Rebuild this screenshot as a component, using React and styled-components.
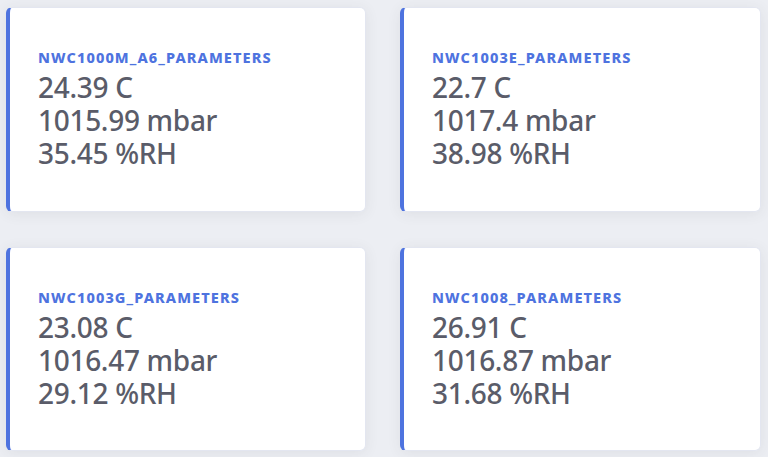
import React from "react";
import styled, { createGlobalStyle } from "styled-components";

const Global = createGlobalStyle`
  html, body { margin: 0; padding: 0; }
  body {
    background: #eceef3;
    font-family: "Noto Sans", sans-serif;
    width: 768px;
    height: 457px;
    overflow: hidden;
  }
`;

const Grid = styled.div`
  display: grid;
  grid-template-columns: 360px 361px;
  grid-template-rows: 205px 204px;
  column-gap: 34px;
  row-gap: 35px;
  padding: 7px 7px 6px 6px;
`;

const Card = styled.div`
  background: #fff;
  border: 1px solid #e3e6f0;
  border-left: 4px solid #4e73df;
  border-radius: 6px;
  box-shadow: 0 2px 14px 0 rgba(58, 59, 69, 0.08);
  padding: 40px 28px 0 28px;
  box-sizing: border-box;
`;

const Title = styled.div`
  color: #4e73df;
  font-size: 14.5px;
  font-weight: 800;
  letter-spacing: 1.1px;
  text-transform: uppercase;
  line-height: 18px;
  margin-bottom: 5px;
`;

const Values = styled.div`
  color: #5a5c69;
  font-size: 28px;
  font-weight: 550;
  letter-spacing: -0.3px;
  line-height: 33px;
`;

const data = [
  { name: "NWC1000M_A6_PARAMETERS", t: "24.39", p: "1015.99", h: "35.45" },
  { name: "NWC1003E_PARAMETERS", t: "22.7", p: "1017.4", h: "38.98" },
  { name: "NWC1003G_PARAMETERS", t: "23.08", p: "1016.47", h: "29.12" },
  { name: "NWC1008_PARAMETERS", t: "26.91", p: "1016.87", h: "31.68" },
];

export default function App() {
  return (
    <>
      <Global />
      <Grid>
        {data.map((d) => (
          <Card key={d.name}>
            <Title>{d.name}</Title>
            <Values>
              {d.t} C<br />
              {d.p} mbar<br />
              {d.h} %RH
            </Values>
          </Card>
        ))}
      </Grid>
    </>
  );
}
